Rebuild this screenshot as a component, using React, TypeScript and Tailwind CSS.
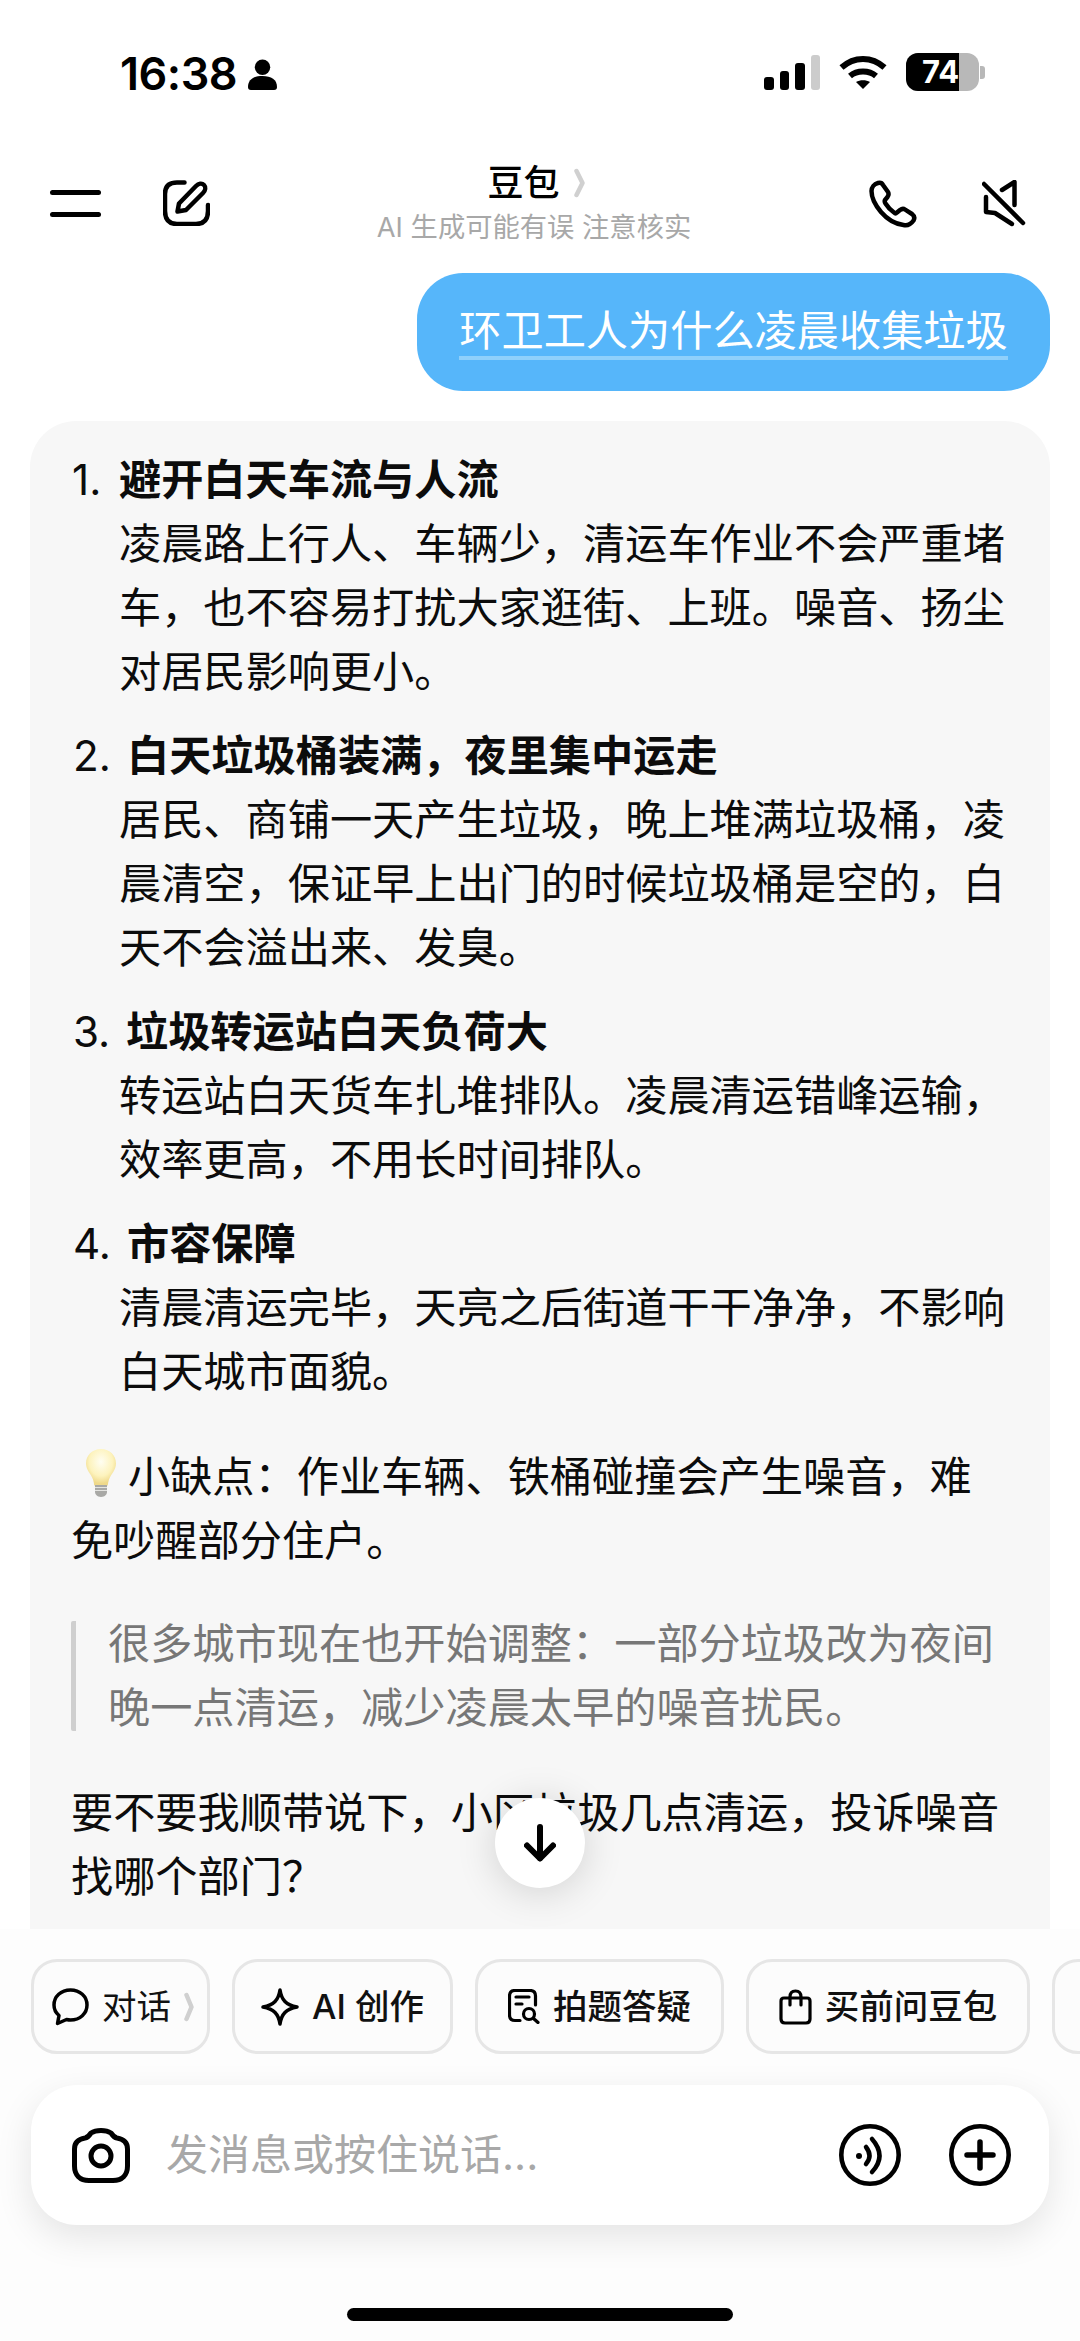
import React from "react";

const Bulb = () => (
  <svg width="34" height="50" viewBox="0 0 34 50" className="inline-block align-[-6px] mr-[10px] ml-[13px]">
    <defs>
      <radialGradient id="b" cx="50%" cy="35%" r="60%">
        <stop offset="0%" stopColor="#fffef2" />
        <stop offset="65%" stopColor="#fdf3bd" />
        <stop offset="100%" stopColor="#efd98a" />
      </radialGradient>
    </defs>
    <path d="M17 1C8 1 2 7.500 2 15.500c0 6.500 5 10.500 7 16 .7 2 1 4 1.200 6h13.600c.2-2 .5-4 1.200-6 2-5.500 7-9.500 7-16C32 7.500 26 1 17 1Z" fill="url(#b)" />
    <path d="M11 37h12v7c0 2-2 5-6 5s-6-3-6-5Z" fill="#a9a9a6" />
    <path d="M11 39.500h12M11 42.500h12" stroke="#e5e5e2" strokeWidth="1.200" />
  </svg>
);

const Item = ({ n, title, gap, children }: { n: string; title: string; gap: string; children: React.ReactNode }) => (
  <div className="pl-[47px]">
    <div className="-ml-[47px] flex">
      <span className={gap}>{n}</span>
      <span className="font-semibold">{title}</span>
    </div>
    <div>{children}</div>
  </div>
);

const Chip = ({ w, children }: { w: string; children: React.ReactNode }) => (
  <div className={`${w} h-[95px] shrink-0 rounded-[26px] border-[3px] border-[#e6e6e6] bg-[#fcfcfc] flex items-center justify-center gap-[13px] text-[34.500px] text-[#111]`}>
    {children}
  </div>
);

export default function App() {
  return (
    <div
      lang="zh-CN"
      className="relative w-[1080px] h-[2341px] overflow-hidden bg-white flex flex-col text-black font-['Inter','Noto_Sans_CJK_SC',sans-serif]"
    >
      {/* status bar */}
      <div className="h-[150px] shrink-0 flex items-start justify-between pt-[46px] pl-[120px] pr-[95px]">
        <div className="flex items-center gap-[11px]">
          <span className="text-[45px] font-semibold leading-[56px] tracking-[-0.5px]">16:38</span>
          <svg width="29" height="31" viewBox="0 0 30 32">
            <circle cx="15" cy="8.500" r="8" fill="#000" />
            <path d="M0 29c0-8 6-11.500 15-11.500S30 21 30 29c0 2-1 3-3 3H3c-2 0-3-1-3-3Z" fill="#000" />
          </svg>
        </div>
        <div className="flex items-center gap-[19px] pt-[7px]">
          <div className="flex items-end gap-[6px] h-[35px]">
            <div className="w-[9.500px] h-[13px] rounded-[3px] bg-black" />
            <div className="w-[9.500px] h-[19px] rounded-[3px] bg-black" />
            <div className="w-[9.500px] h-[27px] rounded-[3px] bg-black" />
            <div className="w-[9.500px] h-[35px] rounded-[3px] bg-[#cccccc]" />
          </div>
          <svg width="48" height="35" viewBox="0 0 48 35">
            <path d="M2.500 12.500C15 1 33 1 45.500 12.500" fill="none" stroke="#000" strokeWidth="6" />
            <path d="M11 21C18 15 30 15 37 21" fill="none" stroke="#000" strokeWidth="6" />
            <path d="M17 27C21 24.500 27 24.500 31 27L24 34Z" fill="#000" />
          </svg>
          <div className="flex items-center gap-[1px]">
            <div className="relative w-[73px] h-[38px] rounded-[12px] overflow-hidden bg-[#b8b8b8]">
              <div className="w-[53px] h-full bg-black" />
              <span className="absolute left-[16px] top-0 leading-[38px] text-[31px] font-bold text-white">74</span>
            </div>
            <div className="w-[5px] h-[13px] rounded-r-[3px] bg-[#b8b8b8]" />
          </div>
        </div>
      </div>

      {/* header */}
      <div className="h-[123px] shrink-0 flex items-start justify-between pl-[50px] pr-[53px]">
        <div className="flex items-center gap-[62px] pt-[30px]">
          <div className="w-[51px] h-[27px] flex flex-col justify-between">
            <div className="h-[5px] rounded-full bg-black" />
            <div className="h-[5px] rounded-full bg-black" />
          </div>
          <svg width="47" height="46" viewBox="0 0 47 46" fill="none" stroke="#000" strokeWidth="4.500" strokeLinecap="round" strokeLinejoin="round">
            <path d="M21.500 2.500H14C6 2.500 2 6 2 14V31C2 40 6 44 14 44H33C41 44 45 40 45 31V25" />
            <path d="M14.500 31.500l1.500-8L33 6c2.500-2.500 6-3 8-1 2 2 1.500 5.500-1 8L23 30Z" />
          </svg>
        </div>
        <div className="flex flex-col items-center -ml-[11px] pt-[7px]">
          <div className="flex items-center h-[52px] ml-[6px]">
            <span className="text-[36px] font-medium leading-[52px]">豆包</span>
            <svg width="14" height="30" viewBox="0 0 14 30" className="ml-[13px]">
              <path d="M3.500 3l6 12-6 12" fill="none" stroke="#d0d0d0" strokeWidth="4.500" strokeLinecap="round" strokeLinejoin="round" />
            </svg>
          </div>
          <span className="text-[27.300px] leading-[38px] text-[#a8a8a8]">AI 生成可能有误 注意核实</span>
        </div>
        <div className="flex items-center gap-[65px] pt-[30px]">
          <svg width="48" height="48" viewBox="0 0 48 48" fill="none" stroke="#000" strokeWidth="4.500" strokeLinejoin="round" strokeLinecap="round">
            <path d="M9 3C11 2.500 13 3 14 5L19 12C20 14 20 15 18.500 17L16 20C15.500 21 15.500 22 16.500 23.500C19 27.500 21.500 30 25 32.500C26 33.500 27 33.500 28 32.500L31 30C33 28.500 34.500 28.500 36 29.500L43 34C45.500 36 46 38 44.500 40.500C42 44 38.500 46 34.500 45C26 44 18 39 12 32C6.500 25.500 2.500 18 2.500 11C2.500 7.500 5 4 9 3Z" />
          </svg>
          <svg width="45" height="48" viewBox="0 0 45 48" fill="none" stroke="#000" strokeWidth="4.500" strokeLinejoin="round" strokeLinecap="round">
            <path d="M2 4l39 39" />
            <path d="M20 10L32.500 2V25" />
            <path d="M4 17V32L13 33L30 44" />
          </svg>
        </div>
      </div>

      {/* user bubble */}
      <div className="shrink-0 flex justify-end pr-[30px]">
        <div className="w-[633px] h-[118px] rounded-[46px] bg-[#56b6fa] flex justify-center pt-[33px]">
          <span className="h-[50px] text-[42.200px] leading-[50px] text-white border-b-[4px] border-[#8fd0fb] box-content whitespace-nowrap">
            环卫工人为什么凌晨收集垃圾
          </span>
        </div>
      </div>

      {/* answer card */}
      <div className="flex-1 min-h-0 mt-[30px] mx-[30px] rounded-t-[46px] bg-[#f7f7f7] overflow-hidden pt-[27px] pl-[42px] pr-[43px] text-[42.200px] leading-[64px] text-[#0c0c0c]">
        <div className="flex flex-col gap-[20px]">
          <Item n="1." title="避开白天车流与人流" gap="w-[47px]">
            凌晨路上行人、车辆少，清运车作业不会严重堵车，也不容易打扰大家逛街、上班。噪音、扬尘对居民影响更小。
          </Item>
          <Item n="2." title="白天垃圾桶装满，夜里集中运走" gap="w-[55px] pl-[1px]">
            居民、商铺一天产生垃圾，晚上堆满垃圾桶，凌晨清空，保证早上出门的时候垃圾桶是空的，白天不会溢出来、发臭。
          </Item>
          <Item n="3." title="垃圾转运站白天负荷大" gap="w-[54px] pl-[1px]">
            转运站白天货车扎堆排队。凌晨清运错峰运输，效率更高，不用长时间排队。
          </Item>
          <Item n="4." title="市容保障" gap="w-[55px] pl-[1px]">
            清晨清运完毕，天亮之后街道干干净净，不影响白天城市面貌。
          </Item>
        </div>
        <p className="mt-[41px] -ml-[1px]">
          <Bulb />
          小缺点：作业车辆、铁桶碰撞会产生噪音，难免吵醒部分住户。
        </p>
        <div className="mt-[48px] border-l-[5px] border-[#cfcfcf] rounded-[2px] pl-[32px] text-[#777] h-[110px] flex items-center -ml-[1px]">
          <p className="leading-[64px]">很多城市现在也开始调整：一部分垃圾改为夜间晚一点清运，减少凌晨太早的噪音扰民。</p>
        </div>
        <p className="mt-[50px] -ml-[1px]">要不要我顺带说下，小区垃圾几点清运，投诉噪音找哪个部门？</p>
      </div>

      {/* scroll-to-bottom */}
      <div className="absolute left-[495px] top-[1798px] w-[90px] h-[90px] rounded-full bg-white shadow-[0_4px_40px_rgba(0,0,0,0.16)] flex items-center justify-center">
        <svg width="32" height="38" viewBox="0 0 32 38" fill="none" stroke="#000" strokeWidth="6" strokeLinecap="round" strokeLinejoin="round">
          <path d="M16 3v31" />
          <path d="M3 21.500l13 13 13-13" />
        </svg>
      </div>

      {/* bottom area */}
      <div className="relative z-10 h-[412px] shrink-0 bg-[#fdfdfd] flex flex-col">
        <div className="mt-[30px] pl-[31px] flex gap-[22px] overflow-hidden">
          <Chip w="w-[179px]">
            <div className="flex items-center gap-[13px] pl-[6px]">
              <svg width="37" height="38" viewBox="0 0 37 38" fill="none" stroke="#000" strokeWidth="3.500" strokeLinejoin="round">
                <path d="M18.500 2C9 2 2 8.500 2 17c0 4.500 2 8 5 10.500L5.500 35.500l9-4c1.300.3 2.600.5 4 .5C28 32 35 25.500 35 17S28 2 18.500 2Z" />
              </svg>
              <span>对话</span>
              <svg width="11" height="30" viewBox="0 0 11 30">
                <path d="M2.500 3l5 12-5 12" fill="none" stroke="#d0d0d0" strokeWidth="4.500" strokeLinecap="round" strokeLinejoin="round" />
              </svg>
            </div>
          </Chip>
          <Chip w="w-[221px]">
            <svg width="38" height="38" viewBox="0 0 38 38" fill="none" stroke="#000" strokeWidth="3.500" strokeLinejoin="round">
              <path d="M19 2c1.500 10 6 15 17 17-11 2-15.500 7-17 17-1.500-10-6-15-17-17 11-2 15.500-7 17-17Z" />
            </svg>
            <span className="font-medium">AI 创作</span>
          </Chip>
          <Chip w="w-[249px]">
            <svg width="32" height="35" viewBox="0 0 32 35" fill="none" stroke="#000" strokeWidth="3.200" strokeLinecap="round" strokeLinejoin="round">
              <path d="M12 31.500H7C3.500 31.500 1.500 29.500 1.500 26V7C1.500 3.500 3.500 1.500 7 1.500H22C25.500 1.500 27.500 3.500 27.500 7V16" />
              <path d="M8 8h13M8 15h6" />
              <circle cx="21" cy="25" r="5.500" />
              <path d="M25.500 29.500l4.500 4" />
            </svg>
            <span className="font-medium">拍题答疑</span>
          </Chip>
          <Chip w="w-[284px]">
            <svg width="33" height="36" viewBox="0 0 33 36" fill="none" stroke="#000" strokeWidth="3.200" strokeLinecap="round" strokeLinejoin="round">
              <path d="M5 9h23c1.800 0 3 1.200 3 3v18c0 2.500-1.500 4-4 4H6c-2.500 0-4-1.500-4-4V12c0-1.800 1.200-3 3-3Z" />
              <path d="M11 16V8c0-4 2-6 5.500-6S22 4 22 8v8" />
            </svg>
            <span className="font-medium">买前问豆包</span>
          </Chip>
          <Chip w="w-[120px]">
            <span />
          </Chip>
        </div>

        <div className="mt-[31px] mx-[31px] h-[140px] rounded-[46px] bg-white shadow-[0_12px_36px_rgba(0,0,0,0.10)] flex items-center pl-[41px] pr-[38px]">
          <svg width="58" height="55" viewBox="0 0 58 55" fill="none" stroke="#000" strokeWidth="5" strokeLinejoin="round">
            <path d="M19 5C22 3 25 2.500 29 2.500C33 2.500 36 3 39 5C41 8 42.500 9.500 45 10C51 11 55.500 14 55.500 21V38C55.500 47 50 52.500 41 52.500H17C8 52.500 2.500 47 2.500 38V21C2.500 14 7 11 13 10C15.500 9.500 17 8 19 5Z" />
            <circle cx="29" cy="28" r="10" />
          </svg>
          <span className="ml-[36px] text-[42px] leading-[56px] text-[#a8a8a8] flex-1">发消息或按住说话...</span>
          <svg width="62" height="62" viewBox="0 0 62 62" fill="none" stroke="#000" strokeLinecap="round">
            <circle cx="31" cy="31" r="28.700" strokeWidth="4.600" />
            <circle cx="20" cy="32" r="3" fill="#000" stroke="none" />
            <path d="M27 23Q34 32 27 40" strokeWidth="4.500" />
            <path d="M33 15Q48 32 33 48" strokeWidth="4.500" />
          </svg>
          <svg width="62" height="62" viewBox="0 0 62 62" fill="none" stroke="#000" strokeLinecap="round" className="ml-[48px]">
            <circle cx="31" cy="31" r="28.700" strokeWidth="4.600" />
            <path d="M31 18v26M18 31h26" strokeWidth="5.500" />
          </svg>
        </div>

        <div className="mt-[83px] mx-auto w-[386px] h-[13px] rounded-full bg-black" />
      </div>
    </div>
  );
}
